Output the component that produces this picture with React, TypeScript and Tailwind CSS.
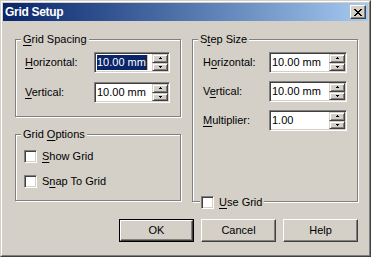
import React from "react";

const raised =
  "border border-t-white border-l-white border-r-[#404040] border-b-[#404040] shadow-[inset_-1px_-1px_0_#808080]";
const sunken =
  "border border-t-[#808080] border-l-[#808080] border-r-white border-b-white shadow-[inset_1px_1px_0_#404040,inset_-1px_-1px_0_#D4D0C8]";
const etched =
  "border border-[#808080] shadow-[inset_1px_1px_0_white,1px_1px_0_white]";

function Arrow({ up }: { up: boolean }) {
  return (
    <svg width="3" height="2" viewBox="0 0 3 2" className="block">
      {up ? (
        <path d="M1 0h1v1h1v1H0V1h1z" fill="black" />
      ) : (
        <path d="M0 0h3v1H2v1H1V1H0z" fill="black" />
      )}
    </svg>
  );
}

function SpinBtn({ up }: { up: boolean }) {
  return (
    <div
      className={`flex-1 flex items-center justify-center bg-[#D4D0C8] border border-t-[#D4D0C8] border-l-[#D4D0C8] border-r-[#404040] border-b-[#404040] shadow-[inset_1px_1px_0_white,inset_-1px_-1px_0_#808080]`}
    >
      <Arrow up={up} />
    </div>
  );
}

function Spin({
  value,
  width,
  selected,
}: {
  value: string;
  width: string;
  selected?: boolean;
}) {
  return (
    <div className={`flex h-[21px] ${width} bg-white ${sunken} p-px`}>
      <div className="flex-1 flex items-center pl-px">
        {selected ? (
          <>
            <span className="bg-[#0A246A] text-white leading-[15px] h-[15px] pr-px">
              {value}
            </span>
            <span className="w-px h-[15px] bg-[#E8C070]" />
          </>
        ) : (
          <span className="leading-[15px]">{value}</span>
        )}
      </div>
      <div className="flex flex-col w-[16px]">
        <SpinBtn up />
        <SpinBtn up={false} />
      </div>
    </div>
  );
}

function Check() {
  return <div className={`w-[13px] h-[13px] bg-white ${sunken}`} />;
}

function U({ children }: { children: React.ReactNode }) {
  return <span className="underline underline-offset-[2px]">{children}</span>;
}

function Group({
  legend,
  className,
  children,
}: {
  legend: React.ReactNode;
  className: string;
  children?: React.ReactNode;
}) {
  return (
    <div className={`relative ${etched} ${className}`}>
      <span className="absolute left-[5px] top-[-7px] bg-[#D4D0C8] px-[2px] leading-[13px]">
        {legend}
      </span>
      {children}
    </div>
  );
}

function Button({
  children,
  isDefault,
}: {
  children: React.ReactNode;
  isDefault?: boolean;
}) {
  if (isDefault) {
    return (
      <div className="w-[75px] h-[23px] border border-black">
        <div className={`w-full h-full flex items-center justify-center ${raised}`}>
          {children}
        </div>
      </div>
    );
  }
  return (
    <div
      className={`w-[75px] h-[23px] flex items-center justify-center ${raised}`}
    >
      {children}
    </div>
  );
}

export default function App() {
  return (
    <div className="w-[371px] h-[257px] bg-[#D4D0C8] border border-t-[#D4D0C8] border-l-[#D4D0C8] border-r-[#404040] border-b-[#404040] font-['Liberation_Sans',Arial,sans-serif] text-[11px] leading-[13px] text-black select-none">
      <div className="h-full flex flex-col border border-t-white border-l-white border-r-[#808080] border-b-[#808080] p-px">
        {/* Title bar */}
        <div className="h-[18px] flex items-center justify-between bg-gradient-to-r from-[#0A246A] to-[#A6CAF0] pl-[2px] pr-[2px]">
          <span className="text-white font-bold text-[12px] tracking-[-0.3px] leading-none">
            Grid Setup
          </span>
          <div
            className={`w-[16px] h-[14px] flex items-center justify-center bg-[#D4D0C8] ${raised}`}
          >
            <svg width="8" height="7" viewBox="0 0 8 7" className="block">
              <path
                d="M0 0h2v1h1v1h2V1h1V0h2v1H7v1H6v1H5v1h1v1h1v1h1v1H6V6H5V5H3v1H2v1H0V6h1V5h1V4h1V3H2V2H1V1H0z"
                fill="black"
              />
            </svg>
          </div>
        </div>

        {/* Body */}
        <div className="flex-1 flex flex-col pt-[18px] pl-[12px]">
          <div className="flex gap-[11px]">
            <div className="flex flex-col gap-[17px]">
              <Group
                legend={
                  <>
                    <U>G</U>rid Spacing
                  </>
                }
                className="w-[166px] h-[78px] pt-[12px] pl-[9px] flex flex-col gap-[9px]"
              >
                <div className="flex items-center">
                  <span className="w-[69px]">
                    <U>H</U>orizontal:
                  </span>
                  <Spin value="10.00 mm" width="w-[76px]" selected />
                </div>
                <div className="flex items-center">
                  <span className="w-[69px]">
                    <U>V</U>ertical:
                  </span>
                  <Spin value="10.00 mm" width="w-[76px]" />
                </div>
              </Group>
              <Group
                legend={
                  <>
                    Grid <U>O</U>ptions
                  </>
                }
                className="w-[166px] h-[67px] pt-[15px] pl-[8px] flex flex-col gap-[12px]"
              >
                <div className="flex items-center gap-[5px] h-[13px]">
                  <Check />
                  <span>
                    <U>S</U>how Grid
                  </span>
                </div>
                <div className="flex items-center gap-[5px] h-[13px]">
                  <Check />
                  <span>
                    S<U>n</U>ap To Grid
                  </span>
                </div>
              </Group>
            </div>

            <Group
              legend={
                <>
                  S<U>t</U>ep Size
                </>
              }
              className="w-[166px] h-[163px] pt-[12px] pl-[10px] flex flex-col gap-[8px]"
            >
              <div className="flex items-center">
                <span className="w-[66px]">
                  H<U>o</U>rizontal:
                </span>
                <Spin value="10.00 mm" width="w-[78px]" />
              </div>
              <div className="flex items-center">
                <span className="w-[66px]">
                  V<U>e</U>rtical:
                </span>
                <Spin value="10.00 mm" width="w-[78px]" />
              </div>
              <div className="flex items-center">
                <span className="w-[66px]">
                  <U>M</U>ultiplier:
                </span>
                <Spin value="1.00" width="w-[78px]" />
              </div>
              <div className="absolute left-[7px] bottom-[-9px] flex items-center gap-[5px] h-[15px] bg-[#D4D0C8] pl-[1px] pr-[2px]">
                <Check />
                <span>
                  <U>U</U>se Grid
                </span>
              </div>
            </Group>
          </div>

          <div className="flex justify-end gap-[7px] pr-[10px] mt-[17px]">
            <Button isDefault>OK</Button>
            <Button>Cancel</Button>
            <Button>Help</Button>
          </div>
        </div>
      </div>
    </div>
  );
}
